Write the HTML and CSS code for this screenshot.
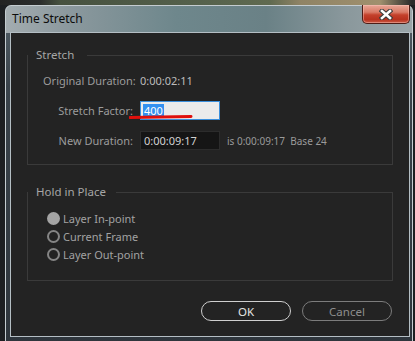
FILE: index.html
```html
<!DOCTYPE html>
<html lang="en">
<head>
  <meta charset="UTF-8">
  <title>Time Stretch</title>
  <link rel="stylesheet" href="styles.css">
</head>
<body>

<div class="desktop">
  <div class="window">
    <div class="titlebar">
      <span class="title">Time Stretch</span>
      <button class="close" aria-label="Close">
        <svg width="14" height="11" viewBox="0 0 14 11">
          <path d="M3 2 L11 9 M11 2 L3 9" stroke="#3a3a3a" stroke-width="4.6" stroke-linecap="square"/>
          <path d="M3 2 L11 9 M11 2 L3 9" stroke="#fff" stroke-width="2.6" stroke-linecap="square"/>
        </svg>
      </button>
    </div>

    <div class="client">
      <fieldset class="group">
        <legend>Stretch</legend>
        <div class="fields">
          <span class="label">Original Duration:</span>
          <span class="value">0:00:02:11</span>
          <span></span>

          <span class="label">Stretch Factor:</span>
          <div class="field light"><span class="sel">400</span></div>
          <span></span>

          <span class="label">New Duration:</span>
          <div class="field dark">0:00:09:17</div>
          <span class="note">is 0:00:09:17 &nbsp;Base 24</span>

          <!-- hand drawn red mark under the factor -->
          <svg class="mark" width="64" height="6" viewBox="0 0 64 6">
            <path d="M1 3.6 L62 2.6" stroke="#e0100c" stroke-width="3" stroke-linecap="round"/>
          </svg>
        </div>
      </fieldset>

      <fieldset class="group hold">
        <legend>Hold in Place</legend>
        <div class="radios">
          <label class="radio"><span class="dot on"></span>Layer In-point</label>
          <label class="radio"><span class="dot"></span>Current Frame</label>
          <label class="radio"><span class="dot"></span>Layer Out-point</label>
        </div>
      </fieldset>

      <div class="buttons">
        <button class="btn ok">OK</button>
        <button class="btn cancel">Cancel</button>
      </div>
    </div>
  </div>
</div>

</body>
</html>
```

FILE: styles.css
```css
body {
  margin: 0;
  width: 415px;
  height: 341px;
  overflow: hidden;
  font-family: 'Noto Sans', sans-serif;
  font-size: 11px;
}

.desktop {
  height: 341px;
  padding: 5px 0 0 5px;
  box-sizing: border-box;
  background:
    linear-gradient(90deg, #232323 0, #2b2d2c 40px, #46513f 60px, #55614c 200px, #606a50 270px, #8f8365 300px, #a0906e 380px, #2a2a2a 412px) top / 100% 5px no-repeat,
    #1d1f22;
}

.window {
  width: 408px;
  height: 345px;
  box-sizing: border-box;
  border: 1px solid #c4ccd0;
  border-radius: 6px 6px 0 0;
  padding: 0 2px 0 4px;
  background:
    linear-gradient(90deg, #a3acb0 0, #8c999e 60px, #6e878c 170px, #6a8186 260px, #8a989c 340px, #9aa5a9 100%) top / 100% 27px no-repeat,
    linear-gradient(180deg, #55626a 0, #3a434b 80px, #2e353c 100%);
}

.titlebar {
  display: flex;
  justify-content: space-between;
  align-items: flex-start;
  height: 26px;
}

.title {
  padding: 5px 0 0 2px;
  color: #0c0c0c;
  font-size: 12px;
  line-height: 16px;
}

.close {
  width: 48px;
  height: 19px;
  margin: -1px 0 0 0;
  padding: 0;
  border: 1px solid #4d1d16;
  border-top: none;
  border-radius: 0 0 5px 5px;
  background: linear-gradient(180deg, #e8a898 0, #d97a66 40%, #c4412c 55%, #b8321f 80%, #c95a44 100%);
  box-shadow: inset 0 0 0 1px rgba(255, 200, 190, 0.45);
  display: flex;
  align-items: center;
  justify-content: center;
}

.client {
  height: 305px;
  box-sizing: border-box;
  border: 1px solid #b4bec4;
  background: #232323;
  padding: 15px 16px 0 16px;
}

.group {
  margin: 0;
  padding: 0;
  border: 1px solid #3a3a3a;
  min-width: 0;
}

.group legend {
  padding: 0 13px 0 8px;
  margin: 0;
  color: #a6a6a6;
  font-size: 11.5px;
  line-height: 14px;
}

.fields {
  position: relative;
  display: grid;
  grid-template-columns: 90px 80px auto;
  grid-auto-rows: 19px;
  column-gap: 7px;
  row-gap: 11px;
  align-items: center;
  padding: 9px 0 14px 15px;
  color: #9c9c9c;
}

.label {
  text-align: right;
  white-space: nowrap;
}

.value {
  color: #bcbcbc;
  white-space: nowrap;
}

.field {
  height: 19px;
  box-sizing: border-box;
  display: flex;
  align-items: center;
  border: 1px solid;
  white-space: nowrap;
}

.field.light {
  background: #ebebeb;
  border-color: #3b8fdc;
  padding-left: 2px;
}

.sel {
  background: #3390f0;
  color: #fff;
  padding: 0 1px;
  line-height: 14px;
}

.field.dark {
  background: #151515;
  border-color: #2c2c2c;
  color: #d2d2d2;
  padding-left: 3px;
}

.note {
  font-size: 10px;
  color: #9a9a9a;
  white-space: nowrap;
}

.mark {
  position: absolute;
  left: 101px;
  top: 52px;
}

.hold {
  margin-top: 20px;
}

.hold legend {
  padding-right: 10px;
}

.radios {
  padding: 10px 0 17px 19px;
}

.radio {
  display: flex;
  align-items: center;
  height: 18px;
  color: #a2a2a2;
}

.dot {
  width: 13px;
  height: 13px;
  box-sizing: border-box;
  border: 2px solid #858585;
  border-radius: 50%;
  margin-right: 3px;
}

.dot.on {
  border: none;
  background: #a4a4a4;
}

.buttons {
  display: flex;
  justify-content: flex-end;
  gap: 11px;
  margin-top: 20px;
  padding-right: 1px;
}

.btn {
  width: 90px;
  height: 20px;
  padding: 0;
  border-radius: 10px;
  background: #232323;
  font-family: 'Noto Sans', sans-serif;
  font-size: 11.5px;
}

.ok {
  border: 1px solid #cfcfcf;
  color: #e6e6e6;
}

.cancel {
  border: 1px solid #7c7c7c;
  color: #8e8e8e;
}
```
